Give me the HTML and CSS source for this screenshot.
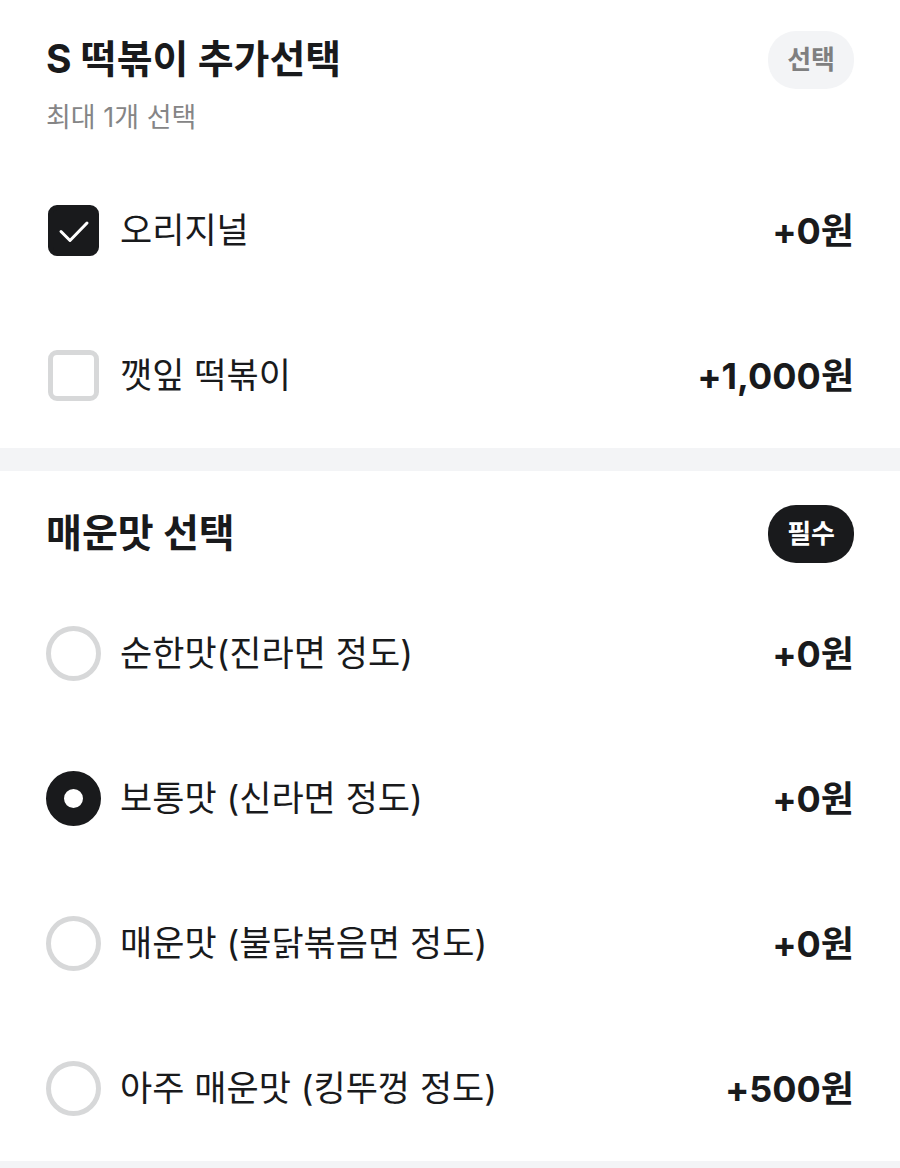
FILE: index.html
```html
<!DOCTYPE html>
<html lang="ko">
<head>
    <meta charset="UTF-8">
    <meta name="viewport" content="width=device-width, initial-scale=1.0">
    <title>옵션 선택</title>
    <link rel="stylesheet" href="styles.css">
</head>
<body>
    <form>
        <!-- 추가선택 -->
        <section class="group">
            <div class="group-head">
                <h2>S 떡볶이 추가선택</h2>
                <span class="badge">선택</span>
            </div>
            <p class="hint">최대 1개 선택</p>
            <ul class="options">
                <li>
                    <label class="option">
                        <input type="checkbox" name="extra" value="original" checked>
                        <svg class="check" viewBox="0 0 32 24" aria-hidden="true"><path d="M3 12.500 L12 21.500 L29 4"/></svg>
                        <span class="name">오리지널</span>
                        <span class="price">+0원</span>
                    </label>
                </li>
                <li>
                    <label class="option">
                        <input type="checkbox" name="extra" value="perilla">
                        <span class="name">깻잎 떡볶이</span>
                        <span class="price">+1,000원</span>
                    </label>
                </li>
            </ul>
        </section>

        <!-- 매운맛 -->
        <section class="group">
            <div class="group-head">
                <h2>매운맛 선택</h2>
                <span class="badge required">필수</span>
            </div>
            <ul class="options">
                <li>
                    <label class="option">
                        <input type="radio" name="spicy" value="mild">
                        <span class="name">순한맛(진라면 정도)</span>
                        <span class="price">+0원</span>
                    </label>
                </li>
                <li>
                    <label class="option">
                        <input type="radio" name="spicy" value="normal" checked>
                        <span class="name">보통맛 (신라면 정도)</span>
                        <span class="price">+0원</span>
                    </label>
                </li>
                <li>
                    <label class="option">
                        <input type="radio" name="spicy" value="hot">
                        <span class="name">매운맛 (불닭볶음면 정도)</span>
                        <span class="price">+0원</span>
                    </label>
                </li>
                <li>
                    <label class="option">
                        <input type="radio" name="spicy" value="very-hot">
                        <span class="name">아주 매운맛 (킹뚜껑 정도)</span>
                        <span class="price">+500원</span>
                    </label>
                </li>
            </ul>
        </section>
    </form>
</body>
</html>
```
FILE: styles.css
```css
* {
    box-sizing: border-box;
}
body {
    margin: 0;
    background-color: #fff;
    color: #191a1c;
    font-family: Inter, "Noto Sans CJK KR", sans-serif;
}
h2, p, ul {
    margin: 0;
    padding: 0;
}
/* Option group */
.group {
    padding: 30px 46px 0;
    border-bottom: 23px solid #f3f4f6;
}
.group + .group {
    padding-top: 33px;
}
.group-head {
    display: flex;
    align-items: center;
    justify-content: space-between;
    height: 60px;
}
.group-head h2 {
    padding-bottom: 8px;
    font-size: 39px;
    font-weight: 700;
}
.badge {
    padding: 0 19px;
    border-radius: 28px;
    background-color: #f3f4f6;
    color: #7f7f80;
    font-size: 26px;
    font-weight: 700;
    line-height: 58px;
}
.badge.required {
    background-color: #191a1c;
    color: #fff;
}
.hint {
    color: #858586;
    font-size: 27px;
    line-height: 56px;
}
/* Option rows */
.options {
    list-style: none;
    padding-top: 17px;
}
.hint + .options {
    padding-top: 12px;
}
.option {
    position: relative;
    display: flex;
    align-items: center;
    height: 145px;
}
.option input {
    appearance: none;
    flex: none;
    width: 55px;
    height: 55px;
    margin: 0 19px 0 0;
    border: 5px solid #d7d8d9;
    background-color: #fff;
}
.option input[type=checkbox] {
    width: 51px;
    height: 51px;
    margin: 0 21px 0 2px;
    border-radius: 9px;
}
.option input[type=radio] {
    border-radius: 50%;
}
.option input[type=checkbox]:checked {
    border-color: #191a1c;
    background-color: #191a1c;
}
.option input[type=radio]:checked {
    border: 18px solid #191a1c;
}
/* Tick over the checked box */
.check {
    position: absolute;
    left: 12px;
    width: 32px;
    height: 24px;
    fill: none;
    stroke: #fff;
    stroke-width: 3;
    stroke-linecap: round;
    stroke-linejoin: round;
    pointer-events: none;
}
.option input:not(:checked) + .check {
    display: none;
}
.name, .price {
    padding-bottom: 6px;
}
.name {
    flex: 1;
    font-size: 35px;
}
.price {
    font-size: 36px;
    font-weight: 700;
}
```
